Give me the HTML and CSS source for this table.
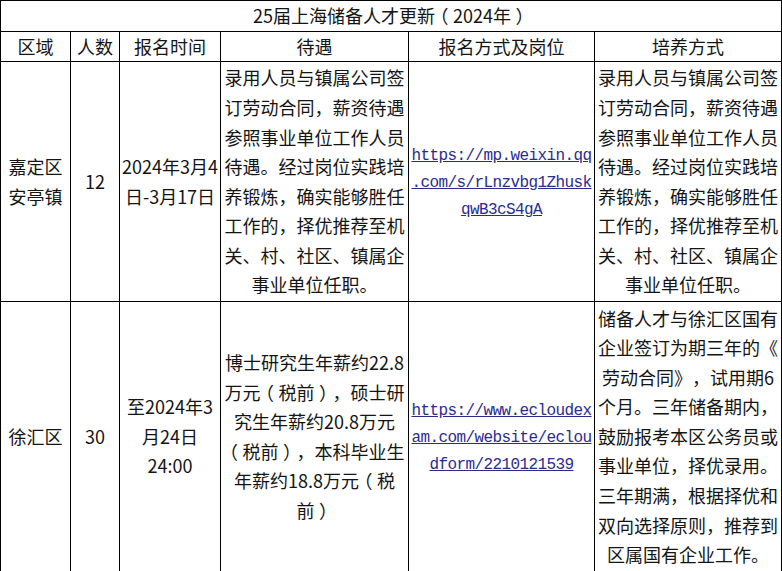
FILE: index.html
```html
<!DOCTYPE html>
<html lang="zh-CN">
<head>
<meta charset="utf-8">
<title>25届上海储备人才更新（2024年）</title>
<link rel="stylesheet" href="styles.css">
</head>
<body>
<table class="tbl">
  <colgroup>
    <col class="c-area"><col class="c-num"><col class="c-time"><col class="c-pay"><col class="c-link"><col class="c-train">
  </colgroup>
  <tr class="r-title"><td colspan="6">25届上海储备人才更新<span class="fp">（</span>2024年<span class="fp">）</span></td></tr>
  <tr class="r-head">
    <td>区域</td><td>人数</td><td>报名时间</td><td>待遇</td><td>报名方式及岗位</td><td>培养方式</td>
  </tr>
  <tr class="r-one">
    <td>嘉定区<br>安亭镇</td>
    <td>12</td>
    <td>2024年3月4<br>日-3月17日</td>
    <td>录用人员与镇属公司签<br>订劳动合同，薪资待遇<br>参照事业单位工作人员<br>待遇。经过岗位实践培<br>养锻炼，确实能够胜任<br>工作的，择优推荐至机<br>关、村、社区、镇属企<br>事业单位任职。</td>
    <td class="linkcell"><a class="lnk" href="#">https://mp.weixin.qq<br>.com/s/rLnzvbg1Zhusk<br>qwB3cS4gA</a></td>
    <td>录用人员与镇属公司签<br>订劳动合同，薪资待遇<br>参照事业单位工作人员<br>待遇。经过岗位实践培<br>养锻炼，确实能够胜任<br>工作的，择优推荐至机<br>关、村、社区、镇属企<br>事业单位任职。</td>
  </tr>
  <tr class="r-two">
    <td>徐汇区</td>
    <td>30</td>
    <td>至2024年3<br>月24日<br>24:00</td>
    <td>博士研究生年薪约22.8<br>万元<span class="fp">（</span>税前<span class="fp">）</span>，硕士研<br>究生年薪约20.8万元<br><span class="fp">（</span>税前<span class="fp">）</span>，本科毕业生<br>年薪约18.8万元<span class="fp">（</span>税<br>前<span class="fp">）</span></td>
    <td class="linkcell"><a class="lnk" href="#">https://www.ecloudex<br>am.com/website/eclou<br>dform/2210121539</a></td>
    <td>储备人才与徐汇区国有<br>企业签订为期三年的《<br>劳动合同》，试用期6<br>个月。三年储备期内，<br>鼓励报考本区公务员或<br>事业单位，择优录用。<br>三年期满，根据择优和<br>双向选择原则，推荐到<br>区属国有企业工作。</td>
  </tr>
</table>
</body>
</html>
```
FILE: styles.css
```css
html, body {
  margin: 0;
  padding: 0;
  background: #ffffff;
}
.tbl {
  border-collapse: collapse;
  table-layout: fixed;
  width: 781px;
  font-family: "Noto Sans CJK SC", "Noto Sans", sans-serif;
  font-size: 18px;
  color: #141414;
  text-spacing-trim: space-all;
}
.tbl td {
  border: 1px solid #000000;
  padding: 0 2px;
  text-align: center;
  vertical-align: middle;
  line-height: 29.6px;
  white-space: nowrap;
  overflow: hidden;
}
.c-area { width: 70px; }
.c-num { width: 49px; }
.c-time { width: 101px; }
.c-pay { width: 188px; }
.c-link { width: 186px; }
.c-train { width: 187px; }
.r-title { height: 30px; }
.r-head { height: 30px; }
.r-one { height: 240px; }
.r-two { height: 270px; }
.fp {
  display: inline-block;
  width: 1em;
  text-align: center;
  font-feature-settings: "halt";
}
.linkcell {
  line-height: 23px !important;
}
.lnk {
  font-family: "Liberation Mono", monospace;
  font-size: 16px;
  letter-spacing: -0.6px;
  color: #2b2b8f;
  text-decoration: underline;
}
```
